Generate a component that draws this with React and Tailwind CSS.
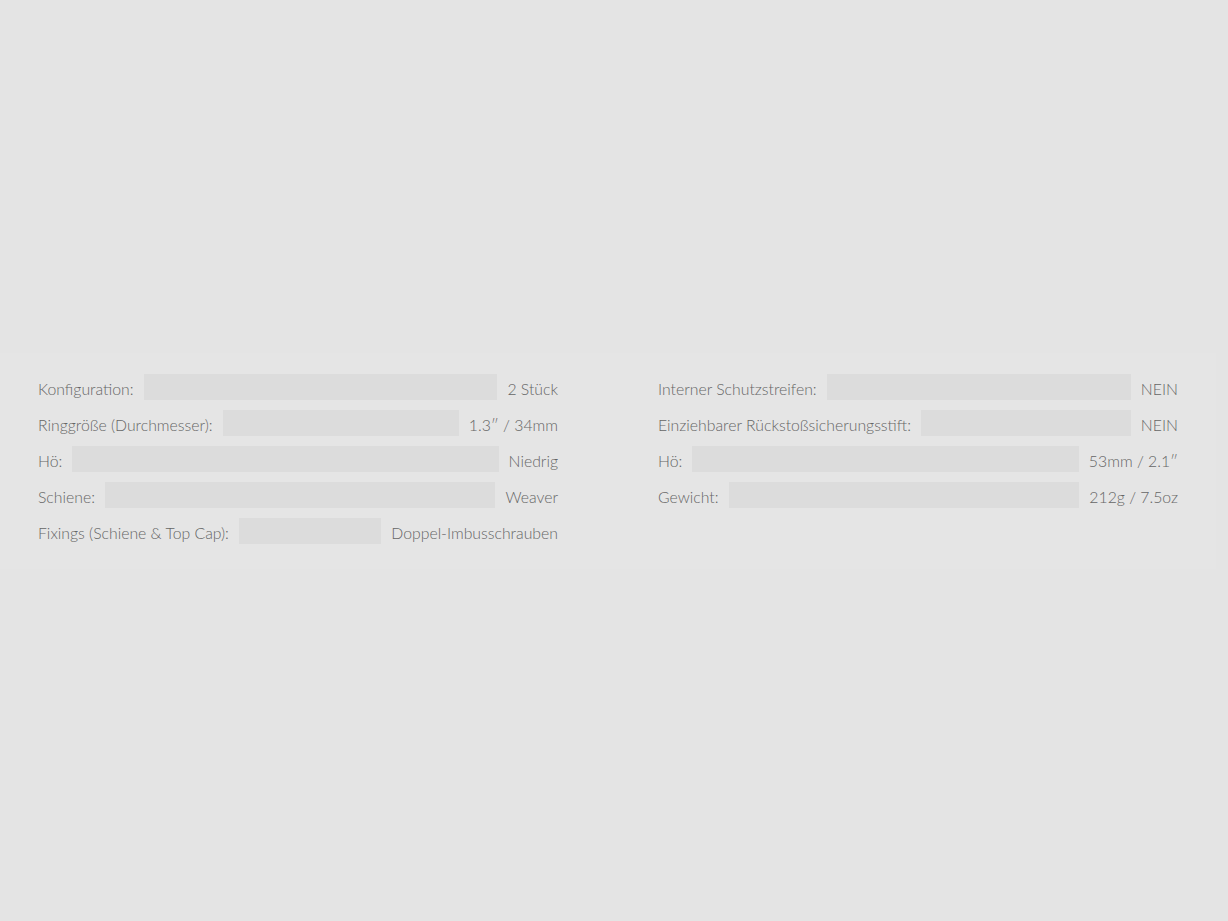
import React from 'react'

const left = [
  ['Konfiguration:', '2 Stück'],
  ['Ringgröße (Durchmesser):', '1.3″ / 34mm'],
  ['Hö:', 'Niedrig'],
  ['Schiene:', 'Weaver'],
  ['Fixings (Schiene & Top Cap):', 'Doppel-Imbusschrauben'],
]

const right = [
  ['Interner Schutzstreifen:', 'NEIN'],
  ['Einziehbarer Rückstoßsicherungsstift:', 'NEIN'],
  ['Hö:', '53mm / 2.1″'],
  ['Gewicht:', '212g / 7.5oz'],
]

// one spec line: label, filler bar, value
function SpecRow({ label, value }) {
  return (
    <div className="flex items-center h-[26px]">
      <span className="whitespace-nowrap pt-[5px]">{label}</span>
      <div className="flex-1 h-[26px] mx-[10px] bg-[#dcdcdc]"></div>
      <span className="whitespace-nowrap pt-[5px]">{value}</span>
    </div>
  )
}

export default function App() {
  return (
    <div
      className="min-h-screen w-full bg-[#e4e4e4] flex items-center text-[#666666] text-[15.8px] font-light"
      style={{ fontFamily: 'Lato, "Open Sans", sans-serif' }}
    >
      <div className="w-[1216px] bg-[#e5e5e5] px-[38px] pt-[21px] pb-[25px]">
        <div className="grid grid-cols-2 gap-x-[100px]">
          <div className="flex flex-col gap-[10px]">
            {left.map(([l, v], i) => (
              <SpecRow key={i} label={l} value={v} />
            ))}
          </div>
          <div className="flex flex-col gap-[10px]">
            {right.map(([l, v], i) => (
              <SpecRow key={i} label={l} value={v} />
            ))}
          </div>
        </div>
      </div>
    </div>
  )
}
